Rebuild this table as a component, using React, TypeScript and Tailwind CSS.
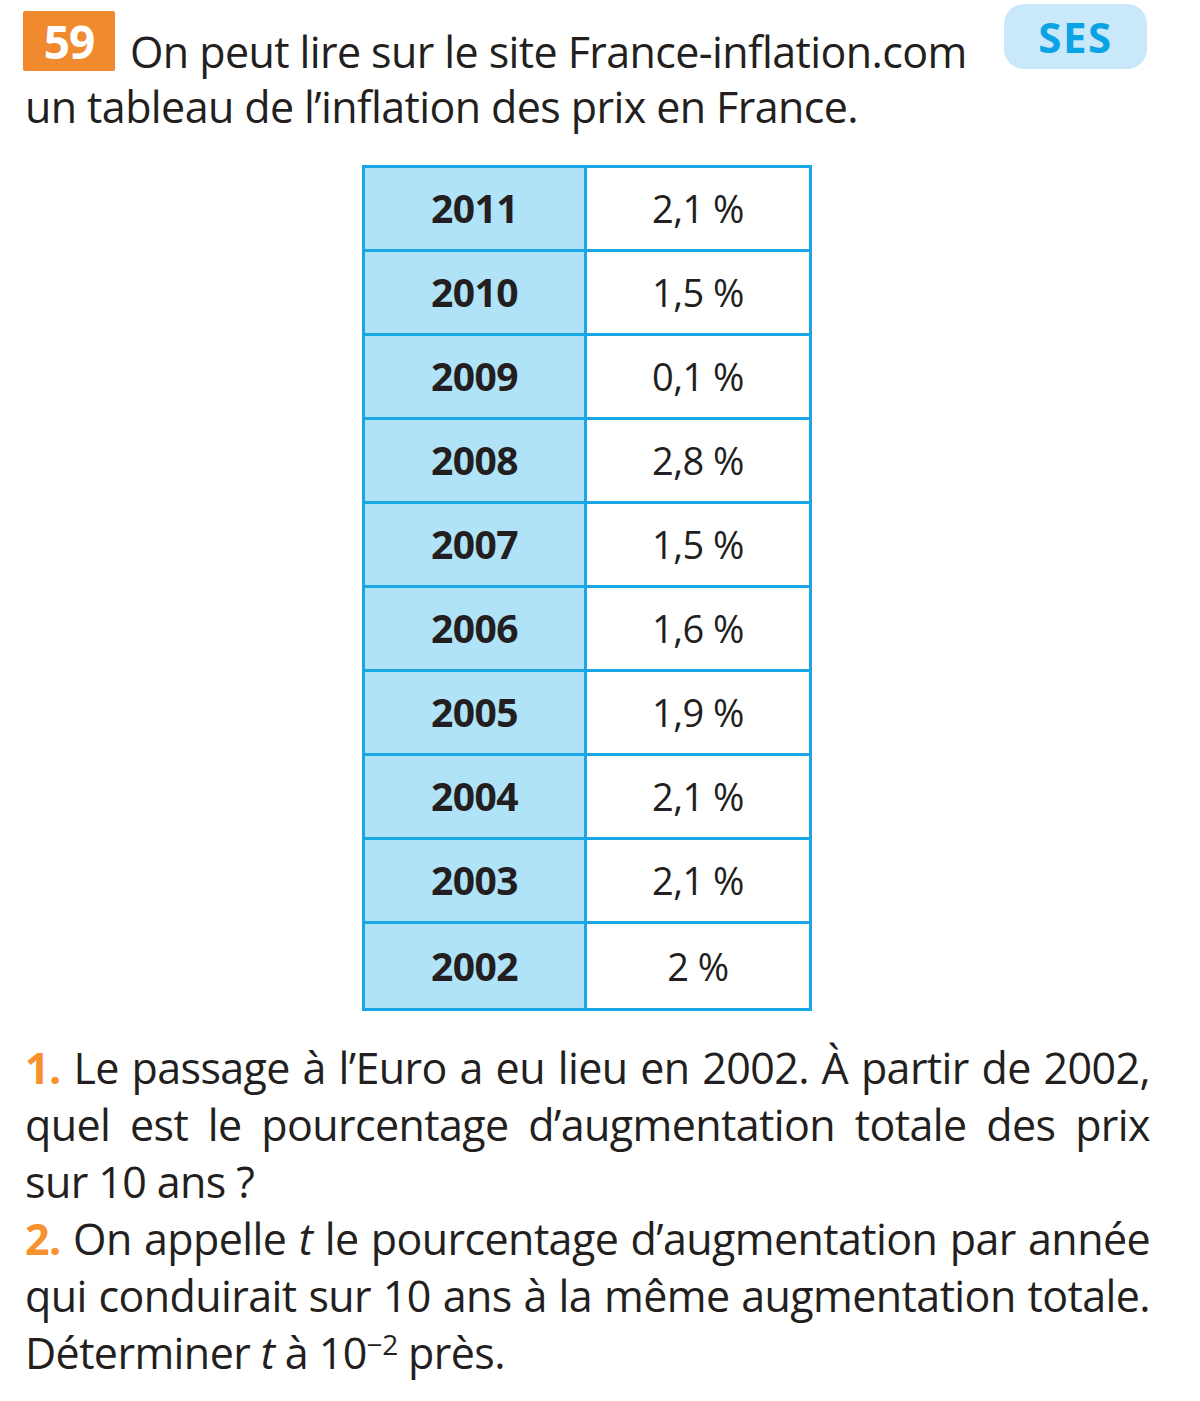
import React from 'react';

const rows = [
  { year: '2011', rate: '2,1 %' },
  { year: '2010', rate: '1,5 %' },
  { year: '2009', rate: '0,1 %' },
  { year: '2008', rate: '2,8 %' },
  { year: '2007', rate: '1,5 %' },
  { year: '2006', rate: '1,6 %' },
  { year: '2005', rate: '1,9 %' },
  { year: '2004', rate: '2,1 %' },
  { year: '2003', rate: '2,1 %' },
  { year: '2002', rate: '2 %' },
];

export default function App() {
  return (
    <div className="w-[1200px] h-[1401px] bg-white text-[#231f20] font-['Open_Sans',sans-serif]">
      {/* Header */}
      <div className="text-[43px] leading-[55px] tracking-[-0.6px]">
        <div className="flex items-start pl-[23px] pt-[11px]">
          <span className="flex items-center justify-center w-[92px] h-[60px] bg-[#f18a2f] rounded-[2px] text-white font-bold text-[46px] leading-none tracking-[-1px]">
            59
          </span>
          <span className="ml-[15px] mt-[13px]">On peut lire sur le site France-inflation.com</span>
          <div className="ml-auto mr-[53px] -mt-[7px] w-[143px] h-[65px] rounded-[20px] bg-[#c9e9fa] flex items-center justify-center">
            <span className="text-[#0aa3e4] font-bold text-[42px] leading-none tracking-[1.5px]">SES</span>
          </div>
        </div>
        <div className="pl-[25px]">un tableau de l’inflation des prix en France.</div>
      </div>

      {/* Table */}
      <div className="ml-[362px] mt-[31px] w-[450px] border-[3px] border-[#1aa7e6]">
        {rows.map((r, i) => (
          <div
            key={r.year}
            className={`flex h-[84px] ${i < rows.length - 1 ? 'border-b-[3px] border-[#1aa7e6]' : ''}`}
          >
            <div className="w-[222px] border-r-[3px] border-[#1aa7e6] bg-[#b0e2f8] flex items-center justify-center font-bold text-[39px] tracking-[-0.5px]">
              {r.year}
            </div>
            <div className="flex-1 flex items-center justify-center text-[38px] tracking-[-0.5px]">
              {r.rate}
            </div>
          </div>
        ))}
      </div>

      {/* Questions */}
      <div className="pl-[25px] pr-[50px] mt-[28px] text-[43px] leading-[57px] tracking-[-0.6px] text-justify">
        <p>
          <span className="text-[#f7922f] font-bold">1.</span> Le passage à l’Euro a eu lieu en 2002. À partir de 2002,
          quel est le pourcentage d’augmentation totale des prix sur 10 ans ?
        </p>
        <p>
          <span className="text-[#f7922f] font-bold">2.</span> On appelle <i>t</i> le pourcentage d’augmentation par année
          qui conduirait sur 10 ans à la même augmentation totale. Déterminer <i>t</i> à 10
          <sup className="text-[28px] relative -top-[14px]">−2</sup> près.
        </p>
      </div>
    </div>
  );
}
